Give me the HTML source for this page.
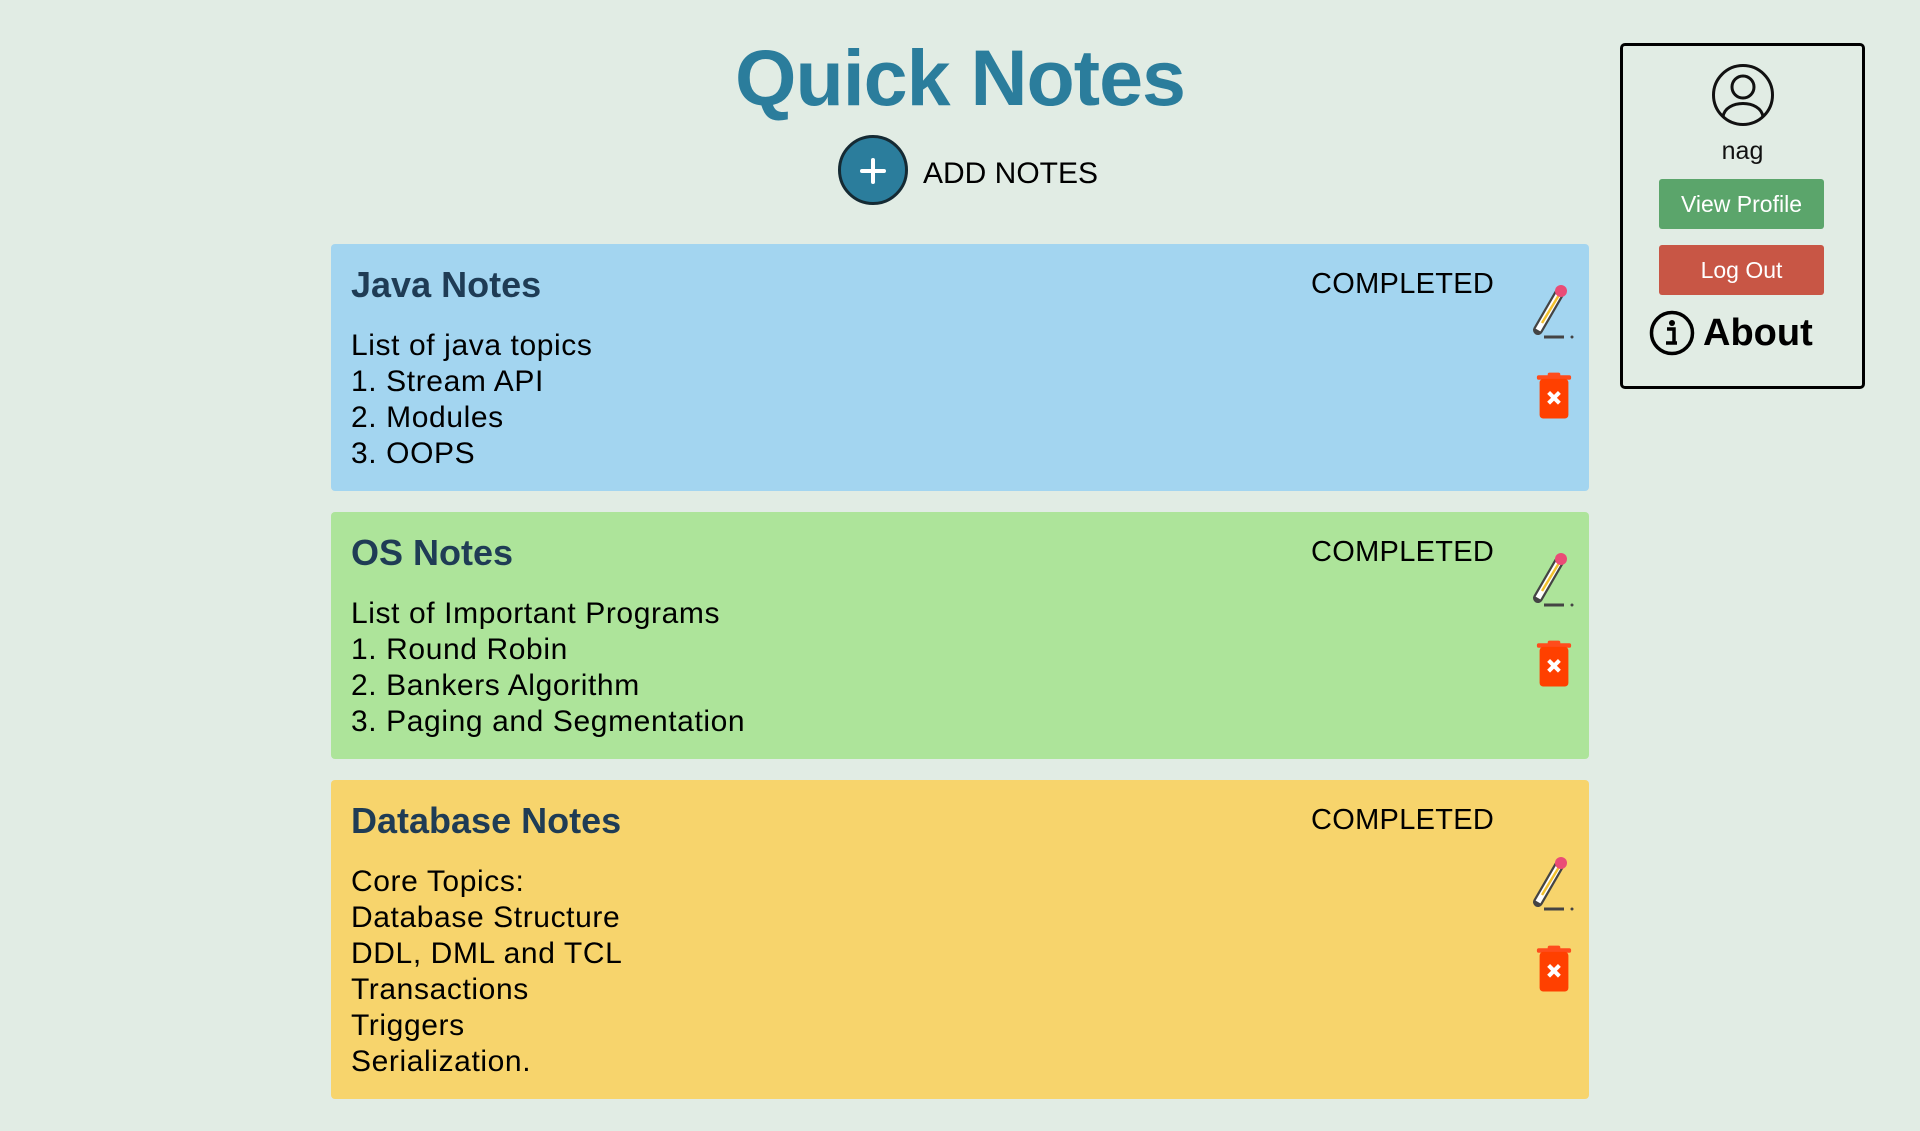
<!DOCTYPE html>
<html><head><meta charset="utf-8"><style>
*{margin:0;padding:0;box-sizing:border-box}
body{width:1920px;height:1131px;background:#e1ece4;font-family:"Liberation Sans",sans-serif;position:relative;overflow:hidden}
h1{position:absolute;left:0;width:1920px;text-align:center;top:32px;font-size:79px;color:#2b7d9c;font-weight:bold;letter-spacing:-1px}
.add{position:absolute;left:838px;top:135px;width:70px;height:70px;border-radius:50%;background:#2b7d9c;border:3px solid #152a33}
.add:before{content:"";position:absolute;left:19px;top:31px;width:26px;height:4px;background:#fff;border-radius:2px}
.add:after{content:"";position:absolute;left:30px;top:20px;width:4px;height:26px;background:#fff;border-radius:2px}
.addt{position:absolute;left:923px;top:157px;font-size:30px;color:#000}
.card{position:absolute;left:331px;width:1258px;border-radius:4px}
.card .t{position:absolute;left:20px;top:20px;font-size:36px;font-weight:bold;color:#1f3c55}
.card .c{position:absolute;left:980px;top:24px;font-size:29px;color:#000;letter-spacing:0.3px}
.card .b{position:absolute;left:20px;top:84px;font-size:30px;line-height:36px;color:#000;letter-spacing:0.6px}
.ic{position:absolute}
.side{position:absolute;left:1620px;top:43px;width:245px;height:346px;border:3px solid #000;border-radius:5px}
.btn{position:absolute;left:36px;width:165px;height:50px;border-radius:3px;color:#fff;font-size:23px;text-align:center;line-height:50px}
</style></head><body>
<h1>Quick Notes</h1>
<div class="add"></div><div class="addt">ADD NOTES</div>

<div class="card" style="top:244px;height:247px;background:#a3d5f0">
<div class="t">Java Notes</div><div class="c">COMPLETED</div>
<div class="b">List of java topics<br>1. Stream API<br>2. Modules<br>3. OOPS</div>
<svg class="ic" style="left:1199px;top:40px" width="46" height="56" viewBox="0 0 46 56"><path d="M8 46 L30 8" stroke="#444" stroke-width="10" stroke-linecap="round"/><path d="M8 46 L30 8" stroke="#fff" stroke-width="5.5"/><path d="M12 39 L29 11" stroke="#f2c12e" stroke-width="2.5"/><circle cx="31" cy="7" r="6" fill="#ea4c76"/><path d="M14 53 H34" stroke="#444" stroke-width="3"/><circle cx="42" cy="53" r="1.5" fill="#444"/></svg>
<svg class="ic" style="left:1205px;top:127px" width="36" height="50" viewBox="0 0 40 52"><rect x="1" y="3" width="38" height="5" rx="2" fill="#ff4c1c"/><rect x="13" y="0" width="14" height="5" rx="2" fill="#ff4c1c"/><rect x="4" y="7" width="32" height="44" rx="4" fill="#ff4000"/><path d="M14 22 L26 34 M26 22 L14 34" stroke="#fff" stroke-width="4.5"/></svg>
</div>

<div class="card" style="top:512px;height:247px;background:#ade49a">
<div class="t">OS Notes</div><div class="c">COMPLETED</div>
<div class="b">List of Important Programs<br>1. Round Robin<br>2. Bankers Algorithm<br>3. Paging and Segmentation</div>
<svg class="ic" style="left:1199px;top:40px" width="46" height="56" viewBox="0 0 46 56"><path d="M8 46 L30 8" stroke="#444" stroke-width="10" stroke-linecap="round"/><path d="M8 46 L30 8" stroke="#fff" stroke-width="5.5"/><path d="M12 39 L29 11" stroke="#f2c12e" stroke-width="2.5"/><circle cx="31" cy="7" r="6" fill="#ea4c76"/><path d="M14 53 H34" stroke="#444" stroke-width="3"/><circle cx="42" cy="53" r="1.5" fill="#444"/></svg>
<svg class="ic" style="left:1205px;top:127px" width="36" height="50" viewBox="0 0 40 52"><rect x="1" y="3" width="38" height="5" rx="2" fill="#ff4c1c"/><rect x="13" y="0" width="14" height="5" rx="2" fill="#ff4c1c"/><rect x="4" y="7" width="32" height="44" rx="4" fill="#ff4000"/><path d="M14 22 L26 34 M26 22 L14 34" stroke="#fff" stroke-width="4.5"/></svg>
</div>

<div class="card" style="top:780px;height:319px;background:#f7d46c">
<div class="t">Database Notes</div><div class="c">COMPLETED</div>
<div class="b">Core Topics:<br>Database Structure<br>DDL, DML and TCL<br>Transactions<br>Triggers<br>Serialization.</div>
<svg class="ic" style="left:1199px;top:76px" width="46" height="56" viewBox="0 0 46 56"><path d="M8 46 L30 8" stroke="#444" stroke-width="10" stroke-linecap="round"/><path d="M8 46 L30 8" stroke="#fff" stroke-width="5.5"/><path d="M12 39 L29 11" stroke="#f2c12e" stroke-width="2.5"/><circle cx="31" cy="7" r="6" fill="#ea4c76"/><path d="M14 53 H34" stroke="#444" stroke-width="3"/><circle cx="42" cy="53" r="1.5" fill="#444"/></svg>
<svg class="ic" style="left:1205px;top:164px" width="36" height="50" viewBox="0 0 40 52"><rect x="1" y="3" width="38" height="5" rx="2" fill="#ff4c1c"/><rect x="13" y="0" width="14" height="5" rx="2" fill="#ff4c1c"/><rect x="4" y="7" width="32" height="44" rx="4" fill="#ff4000"/><path d="M14 22 L26 34 M26 22 L14 34" stroke="#fff" stroke-width="4.5"/></svg>
</div>

<div class="side">
<svg style="position:absolute;left:88px;top:17px" width="64" height="64" viewBox="0 0 64 64"><circle cx="32" cy="32" r="29.5" fill="none" stroke="#111" stroke-width="3"/><circle cx="32" cy="24" r="11" fill="none" stroke="#111" stroke-width="3"/><path d="M12 54 C14 36 50 36 52 54" fill="none" stroke="#111" stroke-width="3"/></svg>
<div style="position:absolute;left:0;width:239px;top:91px;text-align:center;font-size:25px;color:#111">nag</div>
<div class="btn" style="top:133px;background:#5ba56b">View Profile</div>
<div class="btn" style="top:199px;background:#c85645">Log Out</div>
<svg style="position:absolute;left:26px;top:264px" width="46" height="46" viewBox="0 0 46 46"><circle cx="23" cy="23" r="20.5" fill="none" stroke="#000" stroke-width="3.5"/><circle cx="23" cy="13" r="3" fill="#000"/><path d="M18 19 H25 V33 H28 M17 33 H28" stroke="#000" stroke-width="3.5" fill="none"/></svg>
<div style="position:absolute;left:80px;top:266px;font-size:38px;font-weight:bold;color:#000">About</div>
</div>
</body></html>
